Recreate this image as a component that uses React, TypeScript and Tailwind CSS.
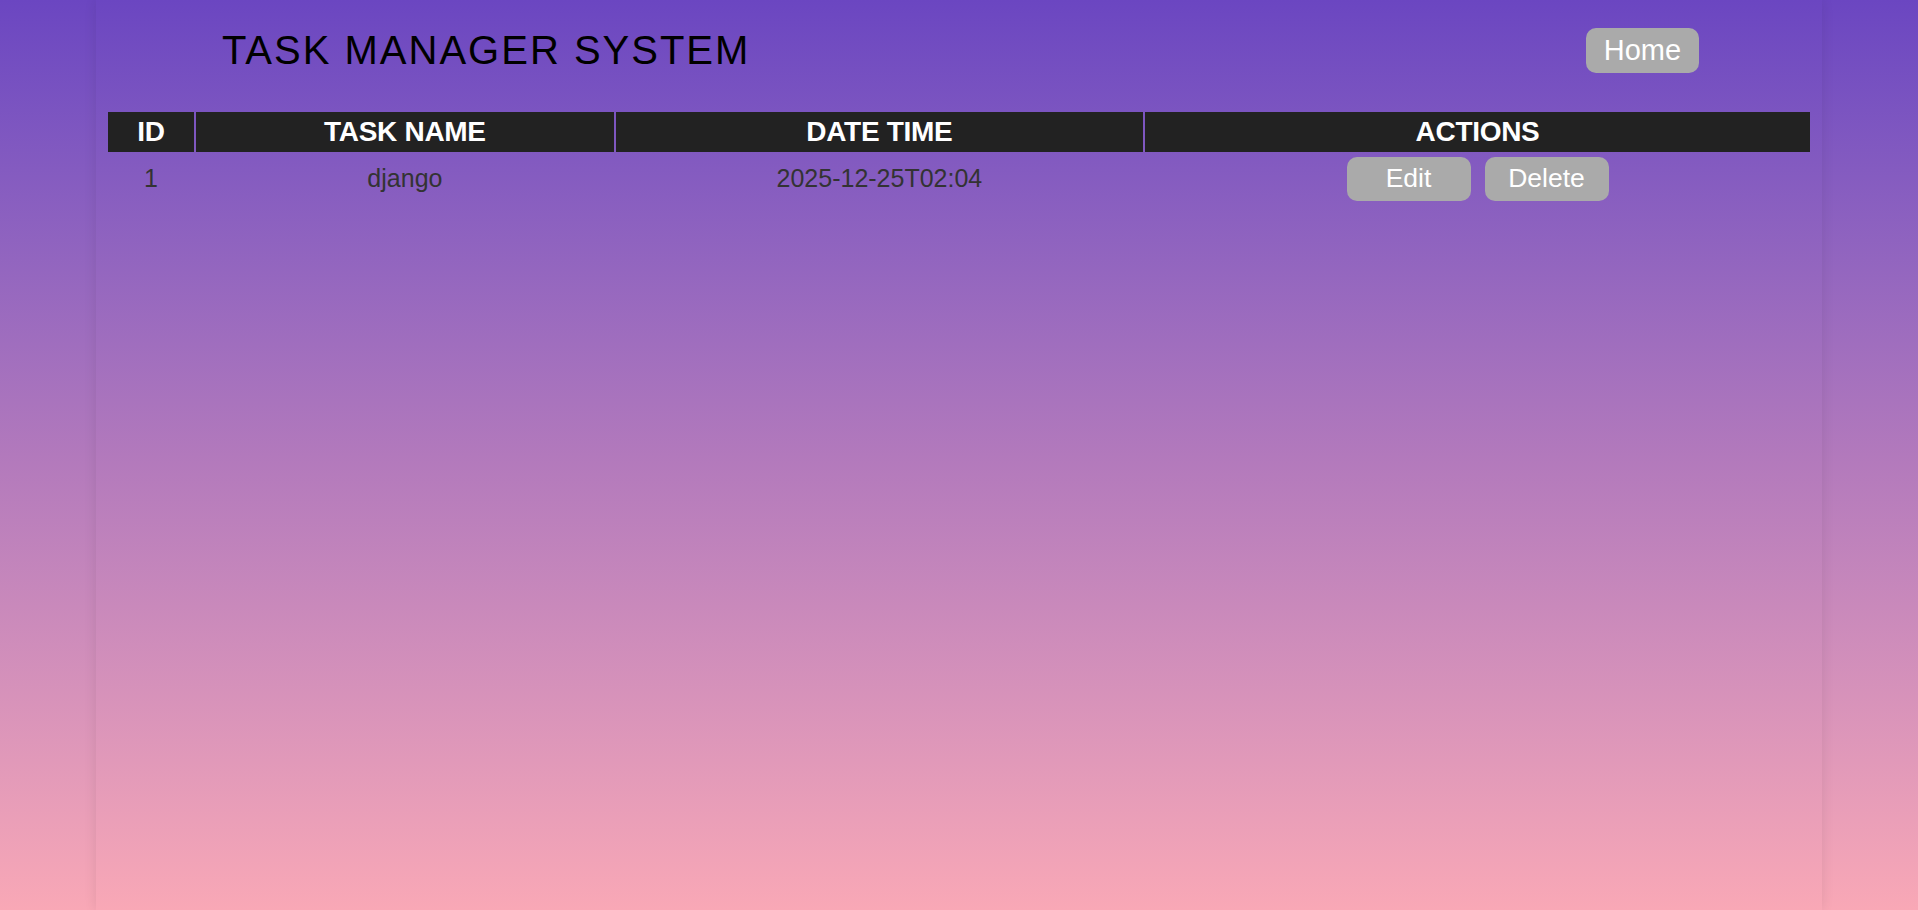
const tasks = [
  { id: 1, name: 'django', datetime: '2025-12-25T02:04' },
];

const App = () => {
  return (
    <div className="min-h-screen w-full bg-gradient-to-b from-[#6b46c1] via-[#b279bc] to-[#f9a8b6] font-['Liberation_Sans',Arial,sans-serif]">
      <div className="w-[90%] mx-auto min-h-screen px-[10px] shadow-[0_0_12px_rgba(0,0,0,0.09)]">
        <header className="h-[100px] flex items-center justify-between pl-[116px] pr-[113px]">
          <h1 className="text-[40px] tracking-[2px] text-black font-normal leading-none">TASK MANAGER SYSTEM</h1>
          <button className="bg-[#aaaaaa] text-white text-[29px] leading-[33px] px-[18px] py-[6px] rounded-[10px]">Home</button>
        </header>
        <table className="w-full mt-[10px] border-separate border-spacing-[2px] text-center">
          <thead>
            <tr className="bg-[#222222] text-white text-[28px] font-bold uppercase tracking-[-0.3px]">
              <th className="w-[86px] py-[4px] leading-[32px]">ID</th>
              <th className="w-[418px] py-[4px] leading-[32px]">Task Name</th>
              <th className="w-[527px] py-[4px] leading-[32px]">Date Time</th>
              <th className="py-[4px] leading-[32px]">Actions</th>
            </tr>
          </thead>
          <tbody>
            {tasks.map((t) => (
              <tr key={t.id} className="text-[25px] text-[#333333]">
                <td className="py-[3px] align-middle">{t.id}</td>
                <td className="py-[3px] align-middle">{t.name}</td>
                <td className="py-[3px] align-middle">{t.datetime}</td>
                <td className="py-[3px] align-middle">
                  <div className="flex justify-center gap-[14px] text-[26.5px]">
                    <button className="w-[124px] h-[44px] bg-[#aaaaaa] text-white rounded-[10px]">Edit</button>
                    <button className="w-[124px] h-[44px] bg-[#aaaaaa] text-white rounded-[10px]">Delete</button>
                  </div>
                </td>
              </tr>
            ))}
          </tbody>
        </table>
      </div>
    </div>
  );
};

export default App;
